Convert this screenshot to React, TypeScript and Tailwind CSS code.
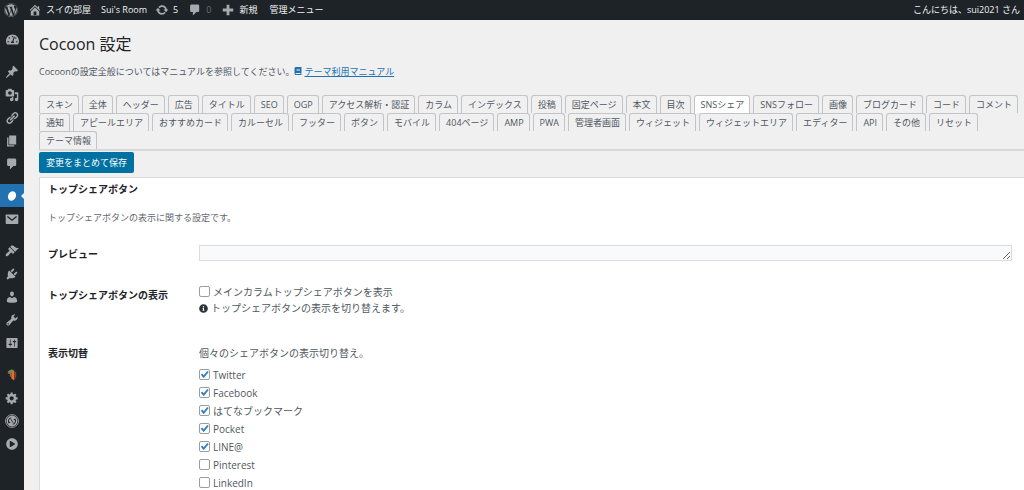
import { useState } from 'react'
import type { ReactNode } from 'react'
import { FaBook, FaInfoCircle, FaPlayCircle, FaTachometerAlt, FaWordpress } from 'react-icons/fa'

const paths = {
  pin: 'M10.44 3.02l1.82-1.82 6.36 6.35-1.83 1.82c-1.05-.68-2.48-.57-3.41.36l-.75.75c-.92.93-1.04 2.35-.35 3.41l-1.83 1.82-2.41-2.41-2.8 2.79c-.42.42-3.38 2.71-3.8 2.29s1.86-3.39 2.28-3.81l2.79-2.79L4.1 9.36l1.83-1.82c1.05.69 2.48.57 3.4-.36l.75-.75c.93-.92 1.05-2.35.36-3.41z',
  media: 'M13 11V4c0-.55-.45-1-1-1h-1.67L9 1H5L3.67 3H2c-.55 0-1 .45-1 1v7c0 .55.45 1 1 1h10c.55 0 1-.45 1-1zM7 4.5c1.38 0 2.5 1.12 2.5 2.5S8.38 9.5 7 9.5 4.5 8.38 4.5 7 5.62 4.5 7 4.5zM14 6h5v10.5c0 1.38-1.12 2.5-2.5 2.5S14 17.88 14 16.5s1.12-2.5 2.5-2.5c.17 0 .34.02.5.05V9h-3V6zm-4 8.05V13h2v3.5c0 1.38-1.12 2.5-2.5 2.5S7 17.88 7 16.5 8.12 14 9.5 14c.17 0 .34.02.5.05z',
  link: 'M17.74 2.76c1.68 1.69 1.68 4.41 0 6.1l-1.53 1.52c-1.12 1.12-2.7 1.47-4.14 1.09l2.62-2.61.76-.77.76-.76c.84-.84.84-2.2 0-3.04-.84-.85-2.2-.85-3.04 0l-.77.76-3.38 3.38c-.37-1.44-.02-3.02 1.1-4.14l1.52-1.53c1.69-1.68 4.42-1.68 6.1 0zM8.59 13.43l5.34-5.34c.42-.42.42-1.1 0-1.52-.44-.43-1.13-.39-1.53 0l-5.33 5.34c-.42.42-.42 1.1 0 1.52.44.43 1.13.39 1.52 0zm-.76 2.29l4.14-4.15c.38 1.44.03 3.02-1.09 4.14l-1.52 1.53c-1.69 1.68-4.41 1.68-6.1 0-1.68-1.68-1.68-4.42 0-6.1l1.53-1.52c1.12-1.12 2.7-1.47 4.14-1.1l-4.14 4.15c-.85.84-.85 2.2 0 3.05.84.84 2.2.84 3.04 0z',
  pages: 'M6 15V2h10v13H6zm-1 1h8v2H3V5h2v11z',
  comment: 'M5 2h9c1.1 0 2 .9 2 2v7c0 1.1-.9 2-2 2h-2l-5 5v-5H5c-1.1 0-2-.9-2-2V4c0-1.1.9-2 2-2z',
  brush: 'M14.48 11.06L7.41 3.99l1.5-1.5c.5-.56 2.3-.47 3.51.32 1.21.8 1.43 1.28 2.91 2.1 1.18.64 2.45 1.26 4.45.85zm-.71.71L6.7 4.7 4.93 6.47c-.39.39-.39 1.02 0 1.41l1.06 1.06c.39.39.39 1.03 0 1.42-.6.6-1.43 1.11-2.21 1.69-.35.26-.7.53-1.01.84C1.43 14.23.4 16.08 1.4 17.07c.99 1 2.84-.03 4.18-1.36.31-.31.58-.66.85-1.02.57-.78 1.08-1.61 1.69-2.21.39-.39 1.02-.39 1.41 0l1.06 1.06c.39.39 1.02.39 1.41 0z',
  plug: 'M13.11 4.36L9.87 7.6 8 5.73l3.24-3.24c.35-.34 1.05-.2 1.56.32.52.51.66 1.21.31 1.55zm-8 1.77l.91-1.12 9.01 9.01-1.19.84c-.71.71-2.63 1.16-3.82 1.16H6.14L4.9 17.26c-.59.59-1.54.59-2.12 0-.59-.58-.59-1.53 0-2.12l1.24-1.24v-3.88c0-1.13.4-3.19 1.09-3.89zm7.26 3.97l3.24-3.24c.34-.35 1.04-.21 1.55.31.52.51.66 1.21.31 1.55l-3.24 3.25z',
  user: 'M10 9.25c-2.27 0-2.73-3.44-2.73-3.44C7 4.02 7.82 2 9.97 2c2.16 0 2.98 2.02 2.71 3.81 0 0-.41 3.44-2.68 3.44zm0 2.57L12.72 10c2.39 0 4.52 2.33 4.52 4.53v2.49s-3.65 1.13-7.24 1.13c-3.65 0-7.24-1.13-7.24-1.13v-2.49c0-2.25 1.94-4.48 4.47-4.48z',
  wrench: 'M16.68 9.77c-1.34 1.34-3.3 1.67-4.95.99l-5.41 6.52c-.99.99-2.59.99-3.58 0s-.99-2.59 0-3.57l6.52-5.42c-.68-1.65-.35-3.61.99-4.95 1.28-1.28 3.12-1.62 4.72-1.06l-2.89 2.89 2.82 2.82 2.86-2.87c.53 1.58.18 3.39-1.08 4.65zM3.81 16.21c.4.39 1.04.39 1.43 0 .4-.4.4-1.04 0-1.43-.39-.4-1.03-.4-1.43 0-.39.39-.39 1.03 0 1.43z',
  sliders: 'M18 16V4c0-.55-.45-1-1-1H3c-.55 0-1 .45-1 1v12c0 .55.45 1 1 1h14c.55 0 1-.45 1-1zM8 11h1c.55 0 1 .45 1 1s-.45 1-1 1H8v1.5c0 .28-.22.5-.5.5s-.5-.22-.5-.5V13H6c-.55 0-1-.45-1-1s.45-1 1-1h1V5.5c0-.28.22-.5.5-.5s.5.22.5.5V11zm5-2h-1c-.55 0-1-.45-1-1s.45-1 1-1h1V5.5c0-.28.22-.5.5-.5s.5.22.5.5V7h1c.55 0 1 .45 1 1s-.45 1-1 1h-1v5.5c0 .28-.22.5-.5.5s-.5-.22-.5-.5V9z',
  gear: 'M18 12h-2.18c-.17.7-.44 1.35-.81 1.93l1.54 1.54-2.1 2.1-1.54-1.54c-.58.36-1.23.63-1.91.79V19H8v-2.18c-.68-.16-1.33-.43-1.91-.79l-1.54 1.54-2.12-2.12 1.54-1.54c-.36-.58-.63-1.23-.79-1.91H1V9.03h2.17c.16-.7.44-1.35.8-1.94L2.43 5.55l2.1-2.1 1.54 1.54c.58-.37 1.24-.64 1.93-.81V2h3v2.18c.68.16 1.33.43 1.91.79l1.54-1.54 2.12 2.12-1.54 1.54c.36.59.64 1.24.8 1.94H18V12zm-8.5 1.5c1.66 0 3-1.34 3-3s-1.34-3-3-3-3 1.34-3 3 1.34 3 3 3z',
  home: 'M16 8.5l1.53 1.53-1.06 1.06L10 4.6l-6.47 6.49-1.06-1.06L10 2.5l4 4v-2h2v4zm-6-2.46l6 5.99V18H4v-5.97zM12 17v-5H8v5h4z',
  update: 'M10.2 3.28c3.53 0 6.43 2.61 6.92 6h2.08l-3.5 4-3.5-4h2.32c-.45-1.97-2.21-3.45-4.32-3.45-1.45 0-2.73.71-3.54 1.78L4.95 5.66C6.23 4.2 8.11 3.28 10.2 3.28zm-.4 13.44c-3.52 0-6.43-2.61-6.92-6H.8l3.5-4c1.17 1.33 2.33 2.67 3.5 4H5.48c.45 1.97 2.21 3.45 4.32 3.45 1.45 0 2.73-.71 3.54-1.78l1.71 1.95c-1.28 1.46-3.15 2.38-5.25 2.38z',
  plus: 'M17.5 8v4H12v5.5H8V12H2.5V8H8V2.5h4V8z',
}

function Icon({ name }: { name: keyof typeof paths }) {
  return (
    <svg viewBox="0 0 20 20" className="size-[14px] shrink-0" fill="currentColor" aria-hidden="true">
      <path fillRule="evenodd" d={paths[name]} />
    </svg>
  )
}

const Egg = () => (
  <svg viewBox="0 0 20 20" className="size-[14px] text-white" fill="currentColor" aria-hidden="true">
    <ellipse cx="10" cy="10" rx="5.6" ry="7" transform="rotate(24 10 10)" />
  </svg>
)

const Mail = () => (
  <svg viewBox="0 0 20 20" className="size-[14px]" aria-hidden="true">
    <rect x="1" y="3.5" width="18" height="13.5" rx="1" fill="currentColor" />
    <path d="M3.5 6.5l6.500 5.200 6.500-5.200" fill="none" stroke="#1d2327" strokeWidth="2" />
  </svg>
)

const Shield = () => (
  <svg viewBox="0 0 20 20" className="size-[14px]" aria-hidden="true">
    <path d="M4 5l5-3v11l-2-1V9L4 8z" fill="#8a6a4a" />
    <path d="M9 3l4 1v14l-4-3z" fill="#d9702f" />
    <path d="M13 4l3 2v6l-3 6z" fill="#8f3d2c" />
    <path d="M4 5l5-3 4 1-4 4z" fill="#6f8f4e" />
  </svg>
)

const Sync = () => (
  <svg viewBox="0 0 20 20" className="size-[14px]" aria-hidden="true">
    <circle cx="10" cy="10" r="9.2" fill="none" stroke="currentColor" strokeWidth="1.2" />
    <circle cx="10" cy="10" r="7.8" fill="currentColor" />
    <path d="M9 5.500c-3.500.500-5 4-3.500 7l2-.800M11 14.500c3.500-.500 5-4 3.500-7l-2 .800" fill="none" stroke="#1d2327" strokeWidth="1.5" />
    <path d="M8.500 7.500l3 5" stroke="#1d2327" strokeWidth="1.2" />
  </svg>
)

const menuGroups: { label: string; icon: ReactNode; active?: boolean }[][] = [
  [{ label: 'ダッシュボード', icon: <FaTachometerAlt size={13} /> }],
  [
    { label: '投稿', icon: <Icon name="pin" /> },
    { label: 'メディア', icon: <Icon name="media" /> },
    { label: 'リンク', icon: <Icon name="link" /> },
    { label: '固定ページ', icon: <Icon name="pages" /> },
    { label: 'コメント', icon: <Icon name="comment" /> },
  ],
  [
    { label: 'Cocoon 設定', icon: <Egg />, active: true },
    { label: 'お問い合わせ', icon: <Mail /> },
  ],
  [
    { label: '外観', icon: <Icon name="brush" /> },
    { label: 'プラグイン', icon: <Icon name="plug" /> },
    { label: 'ユーザー', icon: <Icon name="user" /> },
    { label: 'ツール', icon: <Icon name="wrench" /> },
    { label: '設定', icon: <Icon name="sliders" /> },
  ],
  [
    { label: 'セキュリティ', icon: <Shield /> },
    { label: '一般', icon: <Icon name="gear" /> },
    { label: '同期', icon: <Sync /> },
    { label: 'メニューを開く', icon: <FaPlayCircle size={12} /> },
  ],
]

const tabs = [
  'スキン', '全体', 'ヘッダー', '広告', 'タイトル', 'SEO', 'OGP', 'アクセス解析・認証', 'カラム',
  'インデックス', '投稿', '固定ページ', '本文', '目次', 'SNSシェア', 'SNSフォロー', '画像',
  'ブログカード', 'コード', 'コメント', '通知', 'アピールエリア', 'おすすめカード', 'カルーセル',
  'フッター', 'ボタン', 'モバイル', '404ページ', 'AMP', 'PWA', '管理者画面', 'ウィジェット',
  'ウィジェットエリア', 'エディター', 'API', 'その他', 'リセット', 'テーマ情報',
]

const services = [
  { name: 'Twitter', on: true },
  { name: 'Facebook', on: true },
  { name: 'はてなブックマーク', on: true },
  { name: 'Pocket', on: true },
  { name: 'LINE@', on: true },
  { name: 'Pinterest', on: false },
  { name: 'LinkedIn', on: false },
]

function Check({ label, on = false }: { label: string; on?: boolean }) {
  const [checked, setChecked] = useState(on)
  return (
    <label className="flex h-[18px] w-fit items-center gap-[3px]">
      <span className="relative flex size-[11px]">
        <input
          type="checkbox"
          checked={checked}
          onChange={() => setChecked(!checked)}
          className="size-[11px] appearance-none rounded-[2px] border border-[#9a9da1] bg-white"
        />
        {checked && (
          <svg viewBox="0 0 11 11" className="pointer-events-none absolute inset-0 size-[11px]" aria-hidden="true">
            <path d="M2.5 5.2l2.200 2.500L9 2.500" fill="none" stroke="#3582c4" strokeWidth="1.9" />
          </svg>
        )}
      </span>
      <span className="pt-[2px] leading-[12px]">{label}</span>
    </label>
  )
}

export default function App() {
  const [tab, setTab] = useState('SNSシェア')

  return (
    <div className="flex h-screen flex-col overflow-hidden bg-[#f0f0f1] font-['Open_Sans','Noto_Sans_CJK_JP',sans-serif] text-[9px] leading-[18px] text-[#50575e]">
      <header className="flex h-5 shrink-0 items-center bg-[#1d2327] pr-1 pl-1 text-[#f0f0f1]">
        <a href="#wp" aria-label="WordPress" className="mr-[10px] text-[#a7aaad]"><FaWordpress size={14} /></a>
        <a href="#site" className="mr-[10px] flex items-center gap-1">
          <span className="text-[#a7aaad]"><Icon name="home" /></span>スイの部屋
        </a>
        <a href="#room" className="mr-2">Sui's Room</a>
        <a href="#updates" className="mr-[10px] flex items-center gap-1">
          <span className="text-[#a7aaad]"><Icon name="update" /></span>5
        </a>
        <a href="#comments" className="mr-[10px] flex items-center gap-1 text-[#6c7176]">
          <span className="text-[#a7aaad]"><Icon name="comment" /></span>0
        </a>
        <a href="#new" className="mr-3 flex items-center gap-1">
          <span className="text-[#a7aaad]"><Icon name="plus" /></span>新規
        </a>
        <a href="#menu">管理メニュー</a>
        <a href="#profile" className="ml-auto">こんにちは、sui2021 さん</a>
      </header>

      <div className="flex min-h-0 flex-1">
        <nav className="flex w-6 shrink-0 flex-col gap-[9px] bg-[#1d2327] pt-2 text-[#a7aaad]">
          {menuGroups.map((group, i) => (
            <div key={i}>
              {group.map(item => (
                <a
                  key={item.label}
                  href="#admin"
                  aria-label={item.label}
                  className={`relative flex h-[23px] items-center justify-center ${item.active ? 'bg-[#2271b1]' : ''}`}
                >
                  {item.icon}
                  {item.active && <span className="absolute right-0 border-y-[3px] border-r-[3px] border-y-transparent border-r-[#f0f0f1]" />}
                </a>
              ))}
            </div>
          ))}
        </nav>

        <main className="min-w-0 flex-1 pl-[15px]">
          <h1 className="pt-[13px] text-[16px] leading-[22px] text-[#1d2327]">Cocoon 設定</h1>
          <p className="mt-2">
            Cocoonの設定全般についてはマニュアルを参照してください。
            <a href="#manual" className="text-[#2271b1] underline"><FaBook size={8} className="mr-[2px] inline align-baseline" />テーマ利用マニュアル</a>
          </p>

          <div role="tablist" className="mt-[14px] flex flex-wrap gap-x-[3px] border-b-2 border-[#d8d9db]">
            {tabs.map(t => (
              <button
                key={t}
                type="button"
                role="tab"
                aria-selected={t === tab}
                onClick={() => setTab(t)}
                className={`h-[18px] rounded-t-[3px] border border-b-0 border-[#c3c4c7] pr-[5px] pl-[6px] leading-[18px] ${t === tab ? 'bg-white' : ''}`}
              >
                {t}
              </button>
            ))}
          </div>

          <button type="button" className="mt-px block h-[21px] rounded-[2px] bg-[#0071a1] px-[7px] text-white">変更をまとめて保存</button>

          <section className="mt-1 border-t border-l border-[#dcdcde] bg-white pt-[2px] pr-3 pl-2">
            <h2 className="text-[10px] font-bold text-[#1d2327]">トップシェアボタン</h2>
            <p className="mt-[11px] text-[#646970]">トップシェアボタンの表示に関する設定です。</p>

            <div className="mt-[18px] flex text-[10px]">
              <label htmlFor="preview" className="w-[151px] shrink-0 font-bold text-[#1d2327]">プレビュー</label>
              <textarea id="preview" className="block h-4 min-w-0 flex-1 border border-[#dcdcde] bg-[#f9fafc]" />
            </div>

            <div className="mt-[19px] flex text-[10px]">
              <h3 className="w-[151px] shrink-0 pt-1 font-bold text-[#1d2327]">トップシェアボタンの表示</h3>
              <div>
                <Check label="メインカラムトップシェアボタンを表示" />
                <p className="flex items-center gap-[3px] leading-[16px]">
                  <FaInfoCircle size={9} className="text-[#2c3338]" />トップシェアボタンの表示を切り替えます。
                </p>
              </div>
            </div>

            <div className="mt-[28px] flex text-[10px]">
              <h3 className="w-[151px] shrink-0 font-bold text-[#1d2327]">表示切替</h3>
              <div>
                <p>個々のシェアボタンの表示切り替え。</p>
                <div className="mt-[3px]">
                  {services.map(s => <Check key={s.name} label={s.name} on={s.on} />)}
                </div>
              </div>
            </div>
          </section>
        </main>
      </div>
    </div>
  )
}
